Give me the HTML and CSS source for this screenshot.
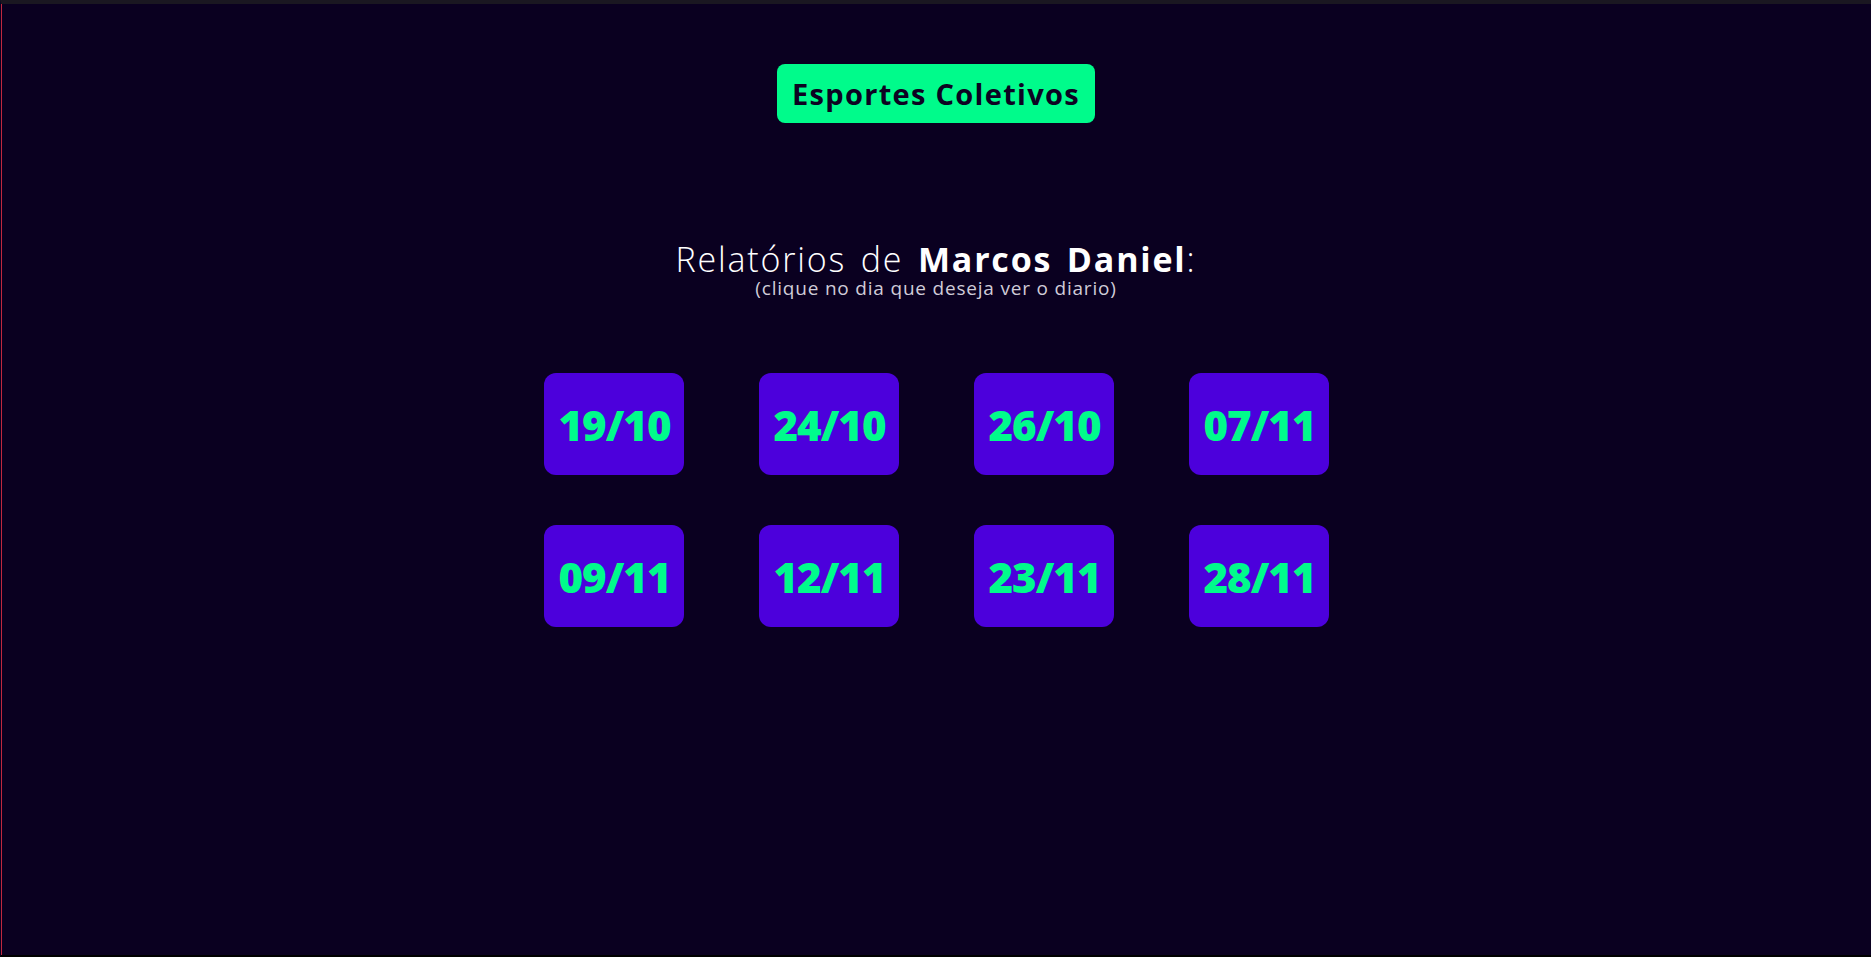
FILE: index.html
```html
<!DOCTYPE html>
<html lang="pt-BR">
<head>
<meta charset="utf-8">
<title>Relatórios</title>
<link rel="stylesheet" href="styles.css">
</head>
<body>
<div class="frame">
  <main class="page">
    <a class="brand" href="#">Esportes Coletivos</a>
    <header class="title">
      <h1 class="title-main">Relatórios de <strong>Marcos Daniel</strong>:</h1>
      <p class="title-sub">(clique no dia que deseja ver o diario)</p>
    </header>
    <section class="days">
      <a class="day" href="#">19/10</a>
      <a class="day" href="#">24/10</a>
      <a class="day" href="#">26/10</a>
      <a class="day" href="#">07/11</a>
      <a class="day" href="#">09/11</a>
      <a class="day" href="#">12/11</a>
      <a class="day" href="#">23/11</a>
      <a class="day" href="#">28/11</a>
    </section>
  </main>
</div>
</body>
</html>
```
FILE: styles.css
```css
html, body {
  margin: 0;
  padding: 0;
  background: #000;
}
body {
  font-family: "Open Sans", "DejaVu Sans", sans-serif;
}
.frame {
  box-sizing: border-box;
  height: 957px;
  background: #0a0020;
  border-top: 4px solid #1a1721;
  border-bottom: 2px solid #000;
  border-left: 1px solid #0a0020;
  box-shadow: inset 1px 0 0 #c0283e;
}
.page {
  display: flex;
  flex-direction: column;
  align-items: center;
  padding-top: 60px;
}
.brand {
  display: block;
  background: #00fb8b;
  color: #0d0322;
  text-decoration: none;
  font-weight: 700;
  font-size: 29px;
  letter-spacing: 1.3px;
  line-height: 59px;
  height: 59px;
  padding: 0 15px;
  border-radius: 8px;
}
.title {
  margin-top: 118px;
  text-align: center;
  color: #fff;
}
.title-main {
  margin: 0;
  font-size: 34px;
  line-height: 36px;
  font-weight: 300;
  letter-spacing: 1.8px;
  word-spacing: 4px;
}
.title-main strong {
  font-weight: 700;
}
.title-sub {
  margin: 0;
  font-size: 19px;
  line-height: 22px;
  font-weight: 400;
  letter-spacing: 0.8px;
  color: #d0ccd8;
}
.days {
  margin-top: 74px;
  display: grid;
  grid-template-columns: repeat(4, 140px);
  grid-auto-rows: 102px;
  column-gap: 75px;
  row-gap: 50px;
}
.day {
  display: flex;
  align-items: center;
  padding-left: 15px;
  background: #4c00dc;
  border-radius: 12px;
  color: #00fb8b;
  text-decoration: none;
  font-weight: 800;
  font-size: 42px;
  letter-spacing: -1px;
  white-space: nowrap;
}
```
